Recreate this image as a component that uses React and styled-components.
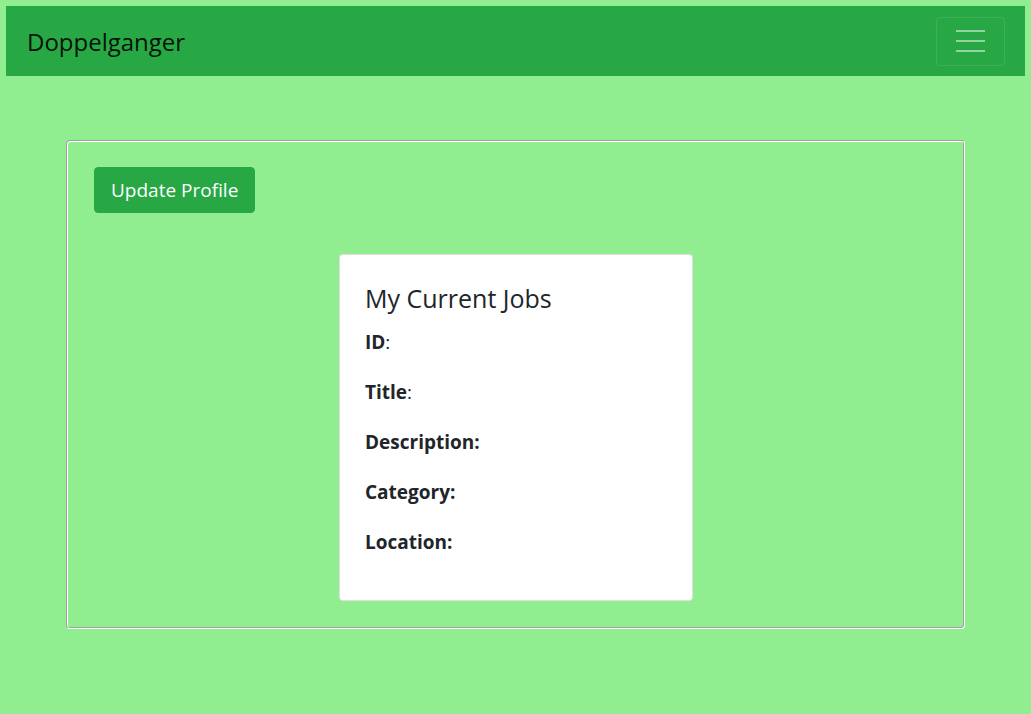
import styled, { createGlobalStyle } from "styled-components";

const GlobalStyle = createGlobalStyle`
  html, body {
    margin: 0;
    background: #90ee90;
    font-family: "Open Sans", "Noto Sans", sans-serif;
    color: #212529;
  }
  #root {
    padding: 6px;
  }
`;

const Navbar = styled.nav`
  display: flex;
  justify-content: space-between;
  align-items: center;
  height: 70px;
  padding: 0 20px 0 21px;
  background: #28a745;
`;

const Brand = styled.span`
  font-size: 24px;
  color: rgba(0, 0, 0, 0.9);
`;

const Toggler = styled.button`
  display: flex;
  align-items: center;
  justify-content: center;
  width: 69px;
  height: 49px;
  padding: 0;
  background: transparent;
  border: 1px solid rgba(255, 255, 255, 0.1);
  border-radius: 4px;
`;

const Panel = styled.section`
  margin: 64px 60px 0 60px;
  padding: 26px 26px 27px 27px;
  border: 1px solid;
  border-color: #a0a0a0 #ffffff #ffffff #a0a0a0;
  box-shadow: inset 1px 1px 0 #ffffff, inset -1px -1px 0 #a0a0a0;
  border-radius: 4px;
`;

const Button = styled.button`
  display: block;
  height: 46px;
  padding: 0 16px;
  font-family: inherit;
  font-size: 19px;
  color: #fff;
  background: #28a745;
  border: 1px solid #28a745;
  border-radius: 4px;
`;

const JobCard = styled.div`
  width: 354px;
  height: 347px;
  box-sizing: border-box;
  margin: 41px auto 0;
  padding: 28px 25px 25px;
  background: #fff;
  border: 1px solid rgba(0, 0, 0, 0.125);
  border-radius: 4px;
`;

const CardTitle = styled.h5`
  margin: 0 0 16px;
  font-size: 25px;
  font-weight: 400;
  line-height: 1.2;
`;

const Fields = styled.div`
  display: flex;
  flex-direction: column;
  gap: 23px;
`;

const Field = styled.div`
  font-size: 19px;
  line-height: 27px;
`;

const fields = [
  ["ID", false],
  ["Title", false],
  ["Description", true],
  ["Category", true],
  ["Location", true],
];

export default function App() {
  return (
    <>
      <GlobalStyle />
      <Navbar>
        <Brand>Doppelganger</Brand>
        <Toggler aria-label="Toggle navigation">
          <svg width="30" height="30" viewBox="0 0 30 30">
            <path
              d="M0 5h29M0 15h29M0 25h29"
              stroke="rgba(255,255,255,0.5)"
              strokeWidth="2"
            />
          </svg>
        </Toggler>
      </Navbar>
      <Panel>
        <Button>Update Profile</Button>
        <JobCard>
          <CardTitle>My Current Jobs</CardTitle>
          <Fields>
            {fields.map(([label, boldColon]) => (
              <Field key={label}>
                {boldColon ? <b>{label}:</b> : <><b>{label}</b>:</>}
              </Field>
            ))}
          </Fields>
        </JobCard>
      </Panel>
    </>
  );
}
